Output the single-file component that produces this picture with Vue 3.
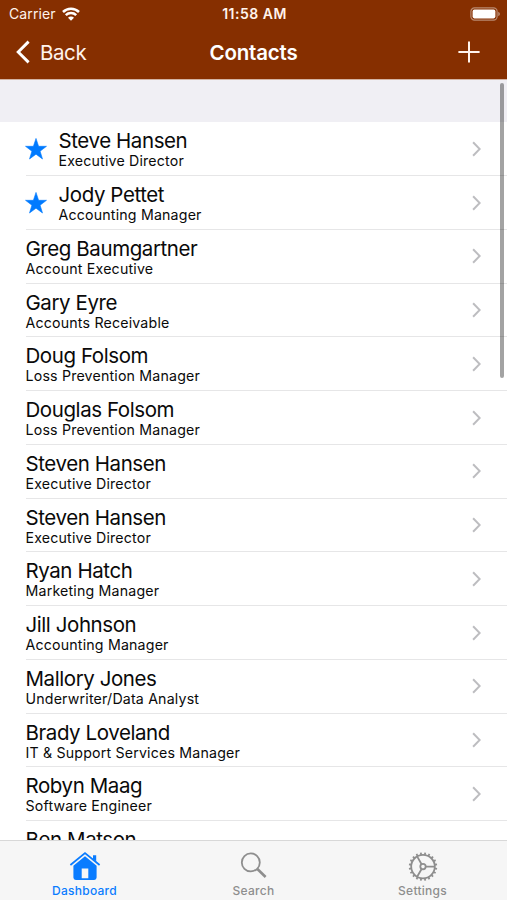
<script setup>
    import { ref } from 'vue'

    const contacts = [
        { name: 'Steve Hansen', title: 'Executive Director', starred: true },
        { name: 'Jody Pettet', title: 'Accounting Manager', starred: true },
        { name: 'Greg Baumgartner', title: 'Account Executive' },
        { name: 'Gary Eyre', title: 'Accounts Receivable' },
        { name: 'Doug Folsom', title: 'Loss Prevention Manager' },
        { name: 'Douglas Folsom', title: 'Loss Prevention Manager' },
        { name: 'Steven Hansen', title: 'Executive Director' },
        { name: 'Steven Hansen', title: 'Executive Director' },
        { name: 'Ryan Hatch', title: 'Marketing Manager' },
        { name: 'Jill Johnson', title: 'Accounting Manager' },
        { name: 'Mallory Jones', title: 'Underwriter/Data Analyst' },
        { name: 'Brady Loveland', title: 'IT & Support Services Manager' },
        { name: 'Robyn Maag', title: 'Software Engineer' },
        { name: 'Ben Matson' }
    ]

    const activeTab = ref('dashboard')

    // teeth around the settings gear, one every 18 degrees
    const teeth = Array.from({ length: 20 }, (_, i) => i * 18)
</script>

<template>
	<div class="screen">
		<header class="header">
			<div class="status">
				<div class="status-left">
					<span class="carrier">Carrier</span>
					<svg class="wifi" viewBox="0 0 18 14">
						<path d="M1 5a11.4 11.4 0 0 1 16 0" />
						<path d="M3.8 8.2a7.4 7.4 0 0 1 10.4 0" />
						<path class="dot" d="M9 13.8L6 10.8a4.2 4.2 0 0 1 6 0z" />
					</svg>
				</div>
				<span class="time">11:58 AM</span>
				<div class="status-right">
					<svg class="battery" viewBox="0 0 30 14">
						<rect class="case" x="0.9" y="0.9" width="26.2" height="12.2" rx="3.6" />
						<rect class="charge" x="2.6" y="2.6" width="22.8" height="8.8" rx="1.8" />
						<path class="cap" d="M28.2 4.8q1.8 .7 1.8 2.2t-1.8 2.2z" />
					</svg>
				</div>
			</div>
			<nav class="navbar">
				<button class="back" @click="activeTab = 'dashboard'">
					<svg class="back-icon" viewBox="0 0 14 24"><path d="M12.6 1.6L2.2 12l10.4 10.4" /></svg>
					<span>Back</span>
				</button>
				<h1 class="heading">Contacts</h1>
				<button class="add">
					<svg viewBox="0 0 22 22"><path d="M11 0.4v21.2M0.4 11h21.2" /></svg>
				</button>
			</nav>
		</header>

		<main class="content">
			<div class="section-header"></div>
			<ul class="list">
				<li class="contact" v-for="(contact, i) in contacts" :key="i">
					<svg v-if="contact.starred" class="star" viewBox="0 0 22 22">
						<path d="M11 0.4l2.6 7.9h7.9l-6.4 4.9 2.4 7.8-6.5-4.8-6.5 4.8 2.4-7.8-6.4-4.9h7.9z" />
					</svg>
					<div class="info">
						<div class="name">{{ contact.name }}</div>
						<div class="title">{{ contact.title }}</div>
					</div>
					<svg class="chevron" viewBox="0 0 9 16"><path d="M1.1 1.3L7.7 8l-6.6 6.7" /></svg>
				</li>
			</ul>
			<div class="scrollbar"></div>
		</main>

		<footer class="tabbar">
			<button class="tab" :class="{ active: activeTab === 'dashboard' }" @click="activeTab = 'dashboard'">
				<svg class="tab-icon home" viewBox="0 0 32 30">
					<path class="roof" d="M1.4 14L16 2.1 30.6 14" />
					<path class="body" d="M24 4.2h3.2v6.4L24 8zM16 5.2l11.6 9.5v11.9a2.4 2.4 0 0 1-2.4 2.4H6.8a2.4 2.4 0 0 1-2.4-2.4V14.7zM12.7 17.4v9.8h6.6v-9.8z" />
				</svg>
				<span>Dashboard</span>
			</button>
			<button class="tab" :class="{ active: activeTab === 'search' }" @click="activeTab = 'search'">
				<svg class="tab-icon" viewBox="0 0 32 30">
					<circle cx="12.8" cy="11.4" r="9" />
					<path class="handle" d="M19.4 18l8.2 8" />
				</svg>
				<span>Search</span>
			</button>
			<button class="tab" :class="{ active: activeTab === 'settings' }" @click="activeTab = 'settings'">
				<svg class="tab-icon" viewBox="0 0 32 30">
					<circle cx="16" cy="15.6" r="11.8" />
					<circle cx="16" cy="15.6" r="2.7" />
					<path d="M18.7 15.6h9.1M14.6 13.2l-4.5-7.8M14.6 18l-4.5 7.8" />
					<path class="tooth" v-for="deg in teeth" :key="deg" d="M16 3.8V1.4" :transform="`rotate(${deg + 9} 16 15.6)`" />
				</svg>
				<span>Settings</span>
			</button>
		</footer>
	</div>
</template>

<style>
body {
	margin: 0;
	overflow: hidden;
}
</style>

<style scoped>
.screen {
	display: flex;
	flex-direction: column;
	width: 507px;
	height: 900px;
	overflow: hidden;
	background: #fff;
	color: #0a0a0a;
	font-family: Inter, "Liberation Sans", sans-serif;
}

button {
	border: 0;
	padding: 0;
	background: none;
	font: inherit;
	color: inherit;
	cursor: pointer;
}

svg {
	display: block;
	fill: none;
	stroke: currentColor;
}

/* header */
.header {
	flex: none;
	height: 80px;
	background: #862f00;
	border-bottom: 1px solid #d3b3a3;
	box-sizing: border-box;
	color: #fff3ec;
}

.status {
	display: grid;
	grid-template-columns: 1fr auto 1fr;
	align-items: center;
	height: 27px;
	padding: 0 7px 0 9px;
}

.status-left {
	display: flex;
	align-items: center;
	gap: 6px;
}

.carrier {
	font-size: 14px;
	letter-spacing: 0.1px;
}

.wifi {
	width: 18px;
	height: 14px;
	stroke-width: 2.5;
	color: #fff;
}

.wifi .dot {
	fill: currentColor;
	stroke: none;
}

.time {
	font-size: 14px;
	font-weight: 600;
	letter-spacing: 0.5px;
}

.status-right {
	display: flex;
	justify-content: flex-end;
}

.battery {
	width: 30px;
	height: 14px;
	stroke: none;
}

.battery .case {
	stroke: #b98a70;
	stroke-width: 1.2;
}

.battery .charge {
	fill: #fff;
}

.battery .cap {
	fill: #b98a70;
}

.navbar {
	display: grid;
	grid-template-columns: 1fr auto 1fr;
	align-items: center;
	height: 50px;
	padding: 0 27px 0 16px;
}

.back {
	display: flex;
	align-items: center;
	gap: 10px;
	font-size: 20.5px;
	letter-spacing: -0.4px;
}

.back-icon {
	width: 14px;
	height: 24px;
	stroke-width: 2.9;
	color: #fff;
}

.heading {
	margin: 0 -5.5px 0 5.5px;
	font-size: 20.5px;
	font-weight: 600;
	letter-spacing: -0.2px;
	color: #fff;
}

.add {
	justify-self: end;
}

.add svg {
	width: 22px;
	height: 22px;
	stroke-width: 2;
}

/* list */
.content {
	position: relative;
	flex: 1;
	min-height: 0;
	overflow: hidden;
}

.section-header {
	height: 42.4px;
	background: #f0eff4;
}

.list {
	margin: 0;
	padding: 0 0 0 25.5px;
	list-style: none;
}

.contact {
	display: flex;
	align-items: center;
	height: 53.75px;
	padding-right: 26px;
	border-bottom: 1px solid #e6e6e7;
	box-sizing: border-box;
}

.star {
	width: 22px;
	height: 22px;
	margin: 0 11.5px 0 -0.5px;
	fill: #007aff;
	stroke: #007aff;
	stroke-width: 0.6;
	stroke-linejoin: round;
}

.info {
	flex: 1;
	padding-top: 2px;
}

.name {
	font-size: 20.5px;
	line-height: 24px;
	letter-spacing: -0.42px;
}

.title {
	min-height: 18px;
	margin-top: -1px;
	font-size: 14.2px;
	line-height: 18px;
	letter-spacing: 0.18px;
}

.chevron {
	width: 9px;
	height: 16px;
	stroke-width: 2;
	color: #bdbdc0;
}

.scrollbar {
	position: absolute;
	top: 3px;
	right: 3px;
	width: 4px;
	height: 295px;
	border-radius: 2px;
	background: rgba(0, 0, 0, 0.36);
}

/* tab bar */
.tabbar {
	display: grid;
	grid-template-columns: repeat(3, 1fr);
	flex: none;
	height: 60px;
	border-top: 1px solid #d8d8d8;
	box-sizing: border-box;
	background: #f6f6f6;
}

.tab {
	display: flex;
	flex-direction: column;
	align-items: center;
	padding-top: 10px;
	color: #8e8e8e;
	font-size: 12px;
	font-weight: 500;
	line-height: 14px;
	letter-spacing: 0.25px;
}

.tab.active {
	color: #0a7cff;
}

.tab-icon {
	width: 32px;
	height: 30px;
	margin-bottom: 3px;
	stroke-width: 1.8;
}

.tab-icon .handle {
	stroke-width: 2.6;
}

.home .roof {
	stroke-width: 1.8;
}

.home .body {
	fill: currentColor;
	fill-rule: evenodd;
	stroke: none;
}
</style>
